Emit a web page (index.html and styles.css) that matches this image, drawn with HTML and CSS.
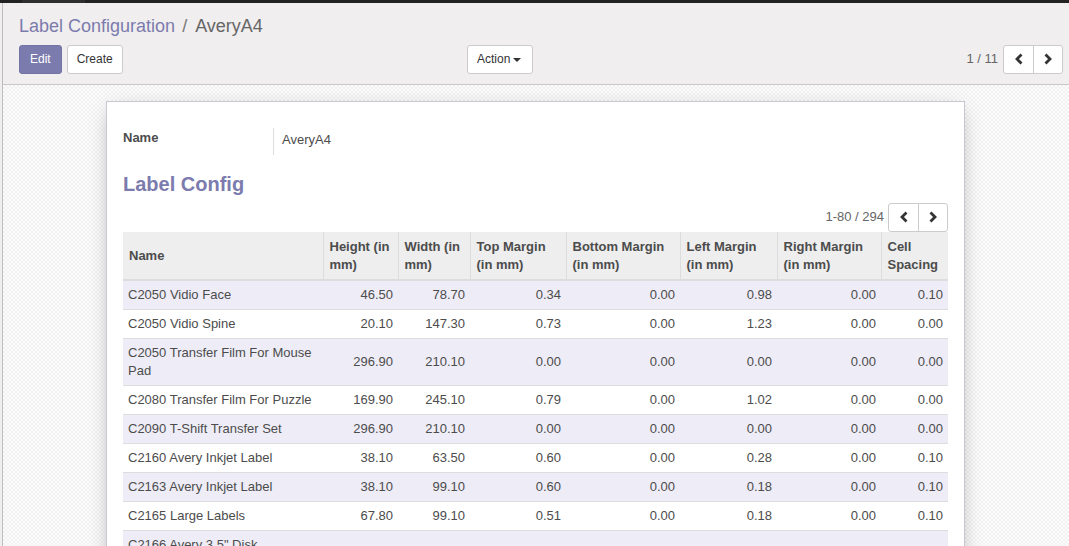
FILE: index.html
```html
<!DOCTYPE html>
<html>
<head>
<meta charset="utf-8">
<link rel="stylesheet" href="styles.css">
</head>
<body>
<div class="topbar"><span class="topbar-seg"></span></div>
<div class="main">
  <div class="cp">
    <div class="breadcrumb"><span class="bc-link">Label Configuration</span><span class="bc-sep">/</span><span class="bc-active">AveryA4</span></div>
    <div class="cp-row">
      <div class="cp-buttons">
        <button class="btn btn-primary">Edit</button>
        <button class="btn">Create</button>
      </div>
      <button class="btn btn-action">Action <span class="caret"></span></button>
      <div class="spacer"></div>
      <div class="pager">
        <span class="pager-val">1 / 11</span>
        <div class="pager-btns">
          <button class="pbtn"><svg width="10" height="12" viewBox="0 0 10 12"><path d="M7.5 1.5 L3 6 L7.5 10.5" fill="none" stroke="#333" stroke-width="2.8"/></svg></button>
          <button class="pbtn"><svg width="10" height="12" viewBox="0 0 10 12"><path d="M2.5 1.5 L7 6 L2.5 10.5" fill="none" stroke="#333" stroke-width="2.8"/></svg></button>
        </div>
      </div>
    </div>
  </div>
  <div class="content">
    <div class="sheet">
      <div class="field-row">
        <div class="field-label">Name</div>
        <div class="field-value">AveryA4</div>
      </div>
      <h2 class="section-title">Label Config</h2>
      <div class="list-pager">
        <span class="pager-val">1-80 / 294</span>
        <div class="pager-btns">
          <button class="pbtn"><svg width="10" height="12" viewBox="0 0 10 12"><path d="M7.5 1.5 L3 6 L7.5 10.5" fill="none" stroke="#333" stroke-width="2.8"/></svg></button>
          <button class="pbtn"><svg width="10" height="12" viewBox="0 0 10 12"><path d="M2.5 1.5 L7 6 L2.5 10.5" fill="none" stroke="#333" stroke-width="2.8"/></svg></button>
        </div>
      </div>
      <table class="list">
        <colgroup>
          <col class="c-name"><col class="c-h"><col class="c-w"><col class="c-top"><col class="c-bot"><col class="c-left"><col class="c-right"><col class="c-cell">
        </colgroup>
        <thead>
          <tr>
            <th>Name</th><th>Height (in mm)</th><th>Width (in mm)</th><th>Top Margin (in mm)</th><th>Bottom Margin (in mm)</th><th>Left Margin (in mm)</th><th>Right Margin (in mm)</th><th>Cell Spacing</th>
          </tr>
        </thead>
        <tbody>
          <tr><td>C2050 Vidio Face</td><td class="n">46.50</td><td class="n">78.70</td><td class="n">0.34</td><td class="n">0.00</td><td class="n">0.98</td><td class="n">0.00</td><td class="n">0.10</td></tr>
          <tr><td>C2050 Vidio Spine</td><td class="n">20.10</td><td class="n">147.30</td><td class="n">0.73</td><td class="n">0.00</td><td class="n">1.23</td><td class="n">0.00</td><td class="n">0.00</td></tr>
          <tr><td>C2050 Transfer Film For Mouse Pad</td><td class="n">296.90</td><td class="n">210.10</td><td class="n">0.00</td><td class="n">0.00</td><td class="n">0.00</td><td class="n">0.00</td><td class="n">0.00</td></tr>
          <tr><td>C2080 Transfer Film For Puzzle</td><td class="n">169.90</td><td class="n">245.10</td><td class="n">0.79</td><td class="n">0.00</td><td class="n">1.02</td><td class="n">0.00</td><td class="n">0.00</td></tr>
          <tr><td>C2090 T-Shift Transfer Set</td><td class="n">296.90</td><td class="n">210.10</td><td class="n">0.00</td><td class="n">0.00</td><td class="n">0.00</td><td class="n">0.00</td><td class="n">0.00</td></tr>
          <tr><td>C2160 Avery Inkjet Label</td><td class="n">38.10</td><td class="n">63.50</td><td class="n">0.60</td><td class="n">0.00</td><td class="n">0.28</td><td class="n">0.00</td><td class="n">0.10</td></tr>
          <tr><td>C2163 Avery Inkjet Label</td><td class="n">38.10</td><td class="n">99.10</td><td class="n">0.60</td><td class="n">0.00</td><td class="n">0.18</td><td class="n">0.00</td><td class="n">0.10</td></tr>
          <tr><td>C2165 Large Labels</td><td class="n">67.80</td><td class="n">99.10</td><td class="n">0.51</td><td class="n">0.00</td><td class="n">0.18</td><td class="n">0.00</td><td class="n">0.10</td></tr>
          <tr><td>C2166 Avery 3.5" Disk Insertable Label</td><td class="n">46.60</td><td class="n">70.00</td><td class="n">0.51</td><td class="n">0.00</td><td class="n">0.24</td><td class="n">0.00</td><td class="n">0.10</td></tr>
        </tbody>
      </table>
    </div>
  </div>
</div>
</body>
</html>
```

FILE: styles.css
```css
* { box-sizing: border-box; }
html, body { margin: 0; padding: 0; }
body {
  font-family: "Liberation Sans", Arial, Helvetica, sans-serif;
  font-size: 13px;
  line-height: 18px;
  color: #4c4c4c;
  background: #f0eeee;
  overflow: hidden;
  height: 546px;
}
.topbar {
  height: 3px;
  background: #222222;
  padding-left: 22px;
}
.topbar-seg {
  display: block;
  width: 63px;
  height: 3px;
  background: #2e2e2e;
}
.main {
  margin-left: 2px;
  border-left: 1px solid #bdbdbd;
  height: 543px;
  display: flex;
  flex-direction: column;
}
.cp {
  background: #f0eeee;
  padding: 9px 6px 10px 16px;
  border-bottom: 1px solid #c8c8c8;
}
.breadcrumb {
  height: 30px;
  line-height: 28px;
  font-size: 18px;
  margin-bottom: 2px;
}
.bc-link { color: #7c7bad; }
.bc-sep { color: #777; margin: 0 8px 0 7px; }
.bc-active { color: #666; }
.cp-row {
  display: flex;
  align-items: center;
  height: 30px;
}
.cp-buttons {
  width: 448px;
  display: flex;
  gap: 5px;
}
.btn {
  font-family: "Liberation Sans", Arial, sans-serif;
  font-size: 12px;
  line-height: 17px;
  height: 29px;
  padding: 5px 9px;
  border: 1px solid #cccccc;
  border-radius: 3px;
  background: #ffffff;
  color: #333333;
}
.btn-primary {
  background: #7c7bad;
  border-color: #7473a6;
  color: #ffffff;
  padding: 5px 10px;
}
.btn-action {
  width: 66px;
  padding: 5px 9px;
  display: flex;
  align-items: center;
  gap: 3px;
}
.caret {
  display: inline-block;
  width: 0;
  height: 0;
  border-left: 4px solid transparent;
  border-right: 4px solid transparent;
  border-top: 4px solid #333;
  margin-top: 1px;
}
.spacer { flex: 1; }
.pager {
  display: flex;
  align-items: center;
  gap: 5px;
}
.pager-val {
  font-size: 13px;
  color: #666;
}
.pager-btns {
  display: flex;
  border: 1px solid #cccccc;
  border-radius: 3px;
  background: #fff;
  height: 29px;
}
.pbtn {
  width: 29px;
  height: 27px;
  border: none;
  background: transparent;
  padding: 0;
  display: flex;
  align-items: center;
  justify-content: center;
}
.pbtn + .pbtn { border-left: 1px solid #cccccc; }
.content {
  flex: 1;
  background-color: #fbfbfb;
  background-image: repeating-conic-gradient(#f1f1f1 0 25%, #fcfcfc 0 50%);
  background-size: 4px 4px;
  padding-top: 16px;
  overflow: hidden;
}
.sheet {
  width: 859px;
  margin-left: 103px;
  background: #ffffff;
  border: 1px solid #c8c8d3;
  box-shadow: 0 5px 20px -6px rgba(0, 0, 0, 0.35);
  padding: 26px 16px 40px 16px;
  min-height: 600px;
}
.field-row {
  display: flex;
  height: 27px;
}
.field-label {
  width: 150px;
  font-weight: bold;
  color: #4c4c4c;
  padding-top: 1px;
}
.field-value {
  border-left: 1px solid #dddddd;
  padding-left: 8px;
  padding-top: 3px;
  color: #4c4c4c;
}
.section-title {
  margin: 18px 0 7px 0;
  font-size: 20px;
  line-height: 22px;
  font-weight: bold;
  color: #7c7bad;
}
.list-pager {
  display: flex;
  justify-content: flex-end;
  align-items: center;
  gap: 4px;
  height: 30px;
}
.list {
  width: 825px;
  table-layout: fixed;
  border-collapse: collapse;
}
.c-name { width: 200px; }
.c-h { width: 75px; }
.c-w { width: 72px; }
.c-top { width: 96px; }
.c-bot { width: 114px; }
.c-left { width: 97px; }
.c-right { width: 104px; }
.c-cell { width: 67px; }
.list th {
  background: #eeeeee;
  text-align: left;
  font-weight: bold;
  vertical-align: middle;
  padding: 5px 5px 5px 6px;
  border-left: 1px solid #dddddd;
  border-bottom: 2px solid #dddddd;
  height: 48px;
}
.list th:first-child { border-left: none; }
.list td {
  padding: 5px 5px 5px 5px;
  border-top: 1px solid #dddddd;
  vertical-align: middle;
}
.list tbody tr:first-child td { border-top: none; }
.list tbody tr:nth-child(odd) { background: #eeedf7; }
.list td.n { text-align: right; }
```
